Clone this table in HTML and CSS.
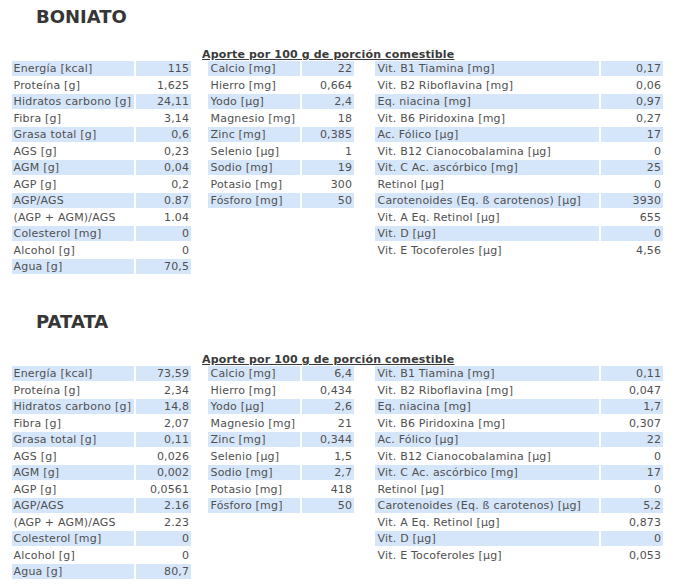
FILE: index.html
```html
<!DOCTYPE html>
<html lang="es">
<head>
<meta charset="utf-8">
<title>Composición nutricional</title>
<link rel="stylesheet" href="styles.css">
</head>
<body>
<section class="food">
  <h2 class="food-title">BONIATO</h2>
  <div class="food-body">
    <table class="nt nt-main">
      <tbody>
        <tr><td>Energía [kcal]</td><td>115</td></tr>
        <tr><td>Proteína [g]</td><td>1,625</td></tr>
        <tr><td>Hidratos carbono [g]</td><td>24,11</td></tr>
        <tr><td>Fibra [g]</td><td>3,14</td></tr>
        <tr><td>Grasa total [g]</td><td>0,6</td></tr>
        <tr><td>AGS [g]</td><td>0,23</td></tr>
        <tr><td>AGM [g]</td><td>0,04</td></tr>
        <tr><td>AGP [g]</td><td>0,2</td></tr>
        <tr><td>AGP/AGS</td><td>0.87</td></tr>
        <tr><td>(AGP + AGM)/AGS</td><td>1.04</td></tr>
        <tr><td>Colesterol [mg]</td><td>0</td></tr>
        <tr><td>Alcohol [g]</td><td>0</td></tr>
        <tr><td>Agua [g]</td><td>70,5</td></tr>
      </tbody>
    </table>
    <div class="portion">
      <div class="portion-head">Aporte por 100 g de porción comestible</div>
      <div class="portion-tables">
        <table class="nt nt-min">
          <tbody>
            <tr><td>Calcio [mg]</td><td>22</td></tr>
            <tr><td>Hierro [mg]</td><td>0,664</td></tr>
            <tr><td>Yodo [µg]</td><td>2,4</td></tr>
            <tr><td>Magnesio [mg]</td><td>18</td></tr>
            <tr><td>Zinc [mg]</td><td>0,385</td></tr>
            <tr><td>Selenio [µg]</td><td>1</td></tr>
            <tr><td>Sodio [mg]</td><td>19</td></tr>
            <tr><td>Potasio [mg]</td><td>300</td></tr>
            <tr><td>Fósforo [mg]</td><td>50</td></tr>
          </tbody>
        </table>
        <table class="nt nt-vit">
          <tbody>
            <tr><td>Vit. B1 Tiamina [mg]</td><td>0,17</td></tr>
            <tr><td>Vit. B2 Riboflavina [mg]</td><td>0,06</td></tr>
            <tr><td>Eq. niacina [mg]</td><td>0,97</td></tr>
            <tr><td>Vit. B6 Piridoxina [mg]</td><td>0,27</td></tr>
            <tr><td>Ac. Fólico [µg]</td><td>17</td></tr>
            <tr><td>Vit. B12 Cianocobalamina [µg]</td><td>0</td></tr>
            <tr><td>Vit. C Ac. ascórbico [mg]</td><td>25</td></tr>
            <tr><td>Retinol [µg]</td><td>0</td></tr>
            <tr><td>Carotenoides (Eq. ß carotenos) [µg]</td><td>3930</td></tr>
            <tr><td>Vit. A Eq. Retinol [µg]</td><td>655</td></tr>
            <tr><td>Vit. D [µg]</td><td>0</td></tr>
            <tr><td>Vit. E Tocoferoles [µg]</td><td>4,56</td></tr>
          </tbody>
        </table>
      </div>
    </div>
  </div>
</section>
<section class="food">
  <h2 class="food-title">PATATA</h2>
  <div class="food-body">
    <table class="nt nt-main">
      <tbody>
        <tr><td>Energía [kcal]</td><td>73,59</td></tr>
        <tr><td>Proteína [g]</td><td>2,34</td></tr>
        <tr><td>Hidratos carbono [g]</td><td>14,8</td></tr>
        <tr><td>Fibra [g]</td><td>2,07</td></tr>
        <tr><td>Grasa total [g]</td><td>0,11</td></tr>
        <tr><td>AGS [g]</td><td>0,026</td></tr>
        <tr><td>AGM [g]</td><td>0,002</td></tr>
        <tr><td>AGP [g]</td><td>0,0561</td></tr>
        <tr><td>AGP/AGS</td><td>2.16</td></tr>
        <tr><td>(AGP + AGM)/AGS</td><td>2.23</td></tr>
        <tr><td>Colesterol [mg]</td><td>0</td></tr>
        <tr><td>Alcohol [g]</td><td>0</td></tr>
        <tr><td>Agua [g]</td><td>80,7</td></tr>
      </tbody>
    </table>
    <div class="portion">
      <div class="portion-head">Aporte por 100 g de porción comestible</div>
      <div class="portion-tables">
        <table class="nt nt-min">
          <tbody>
            <tr><td>Calcio [mg]</td><td>6,4</td></tr>
            <tr><td>Hierro [mg]</td><td>0,434</td></tr>
            <tr><td>Yodo [µg]</td><td>2,6</td></tr>
            <tr><td>Magnesio [mg]</td><td>21</td></tr>
            <tr><td>Zinc [mg]</td><td>0,344</td></tr>
            <tr><td>Selenio [µg]</td><td>1,5</td></tr>
            <tr><td>Sodio [mg]</td><td>2,7</td></tr>
            <tr><td>Potasio [mg]</td><td>418</td></tr>
            <tr><td>Fósforo [mg]</td><td>50</td></tr>
          </tbody>
        </table>
        <table class="nt nt-vit">
          <tbody>
            <tr><td>Vit. B1 Tiamina [mg]</td><td>0,11</td></tr>
            <tr><td>Vit. B2 Riboflavina [mg]</td><td>0,047</td></tr>
            <tr><td>Eq. niacina [mg]</td><td>1,7</td></tr>
            <tr><td>Vit. B6 Piridoxina [mg]</td><td>0,307</td></tr>
            <tr><td>Ac. Fólico [µg]</td><td>22</td></tr>
            <tr><td>Vit. B12 Cianocobalamina [µg]</td><td>0</td></tr>
            <tr><td>Vit. C Ac. ascórbico [mg]</td><td>17</td></tr>
            <tr><td>Retinol [µg]</td><td>0</td></tr>
            <tr><td>Carotenoides (Eq. ß carotenos) [µg]</td><td>5,2</td></tr>
            <tr><td>Vit. A Eq. Retinol [µg]</td><td>0,873</td></tr>
            <tr><td>Vit. D [µg]</td><td>0</td></tr>
            <tr><td>Vit. E Tocoferoles [µg]</td><td>0,053</td></tr>
          </tbody>
        </table>
      </div>
    </div>
  </div>
</section>
</body>
</html>
```
FILE: styles.css
```css
html, body {
  margin: 0;
  padding: 0;
  background: #fff;
}
body {
  font-family: "DejaVu Sans", Verdana, sans-serif;
  font-size: 11px;
  color: #505050;
}
.food {
  height: 305px;
  padding-left: 12px;
  box-sizing: border-box;
}
.food-title {
  margin: 0 0 0 24px;
  padding-top: 6px;
  font-size: 18px;
  line-height: 22px;
  font-weight: bold;
  color: #363636;
}
.food-body {
  display: flex;
  align-items: flex-start;
  margin-top: 20px;
}
.nt {
  display: block;
  border: 0;
}
.nt tbody {
  display: grid;
  column-gap: 2px;
  row-gap: 1.5px;
}
.nt tr {
  display: contents;
}
.nt td {
  display: block;
  height: 15px;
  line-height: 15px;
  padding: 0 2px 0 2px;
  letter-spacing: 0.2px;
  white-space: nowrap;
}
.nt td:first-child {
  padding-left: 1.5px;
}
.nt td + td {
  text-align: right;
  letter-spacing: 0.1px;
}
.nt tr:nth-child(odd) td {
  background: #d6e6fa;
}
.nt-main {
  margin-top: 13px;
}
.nt-main tbody {
  grid-template-columns: 122px 55px;
}
.nt-min tbody {
  grid-template-columns: 92px 52px;
}
.nt-min td:first-child,
.nt-vit td:first-child {
  padding-left: 2.5px;
}
.nt-vit tbody {
  grid-template-columns: 224px 62px;
}
.portion {
  margin-left: 11px;
}
.portion-head {
  font-weight: bold;
  line-height: 13px;
  letter-spacing: 0.16px;
  color: #3a3a3a;
  text-decoration: underline;
}
.portion-tables {
  display: flex;
  align-items: flex-start;
  gap: 21px;
  margin-left: 6px;
}
```
